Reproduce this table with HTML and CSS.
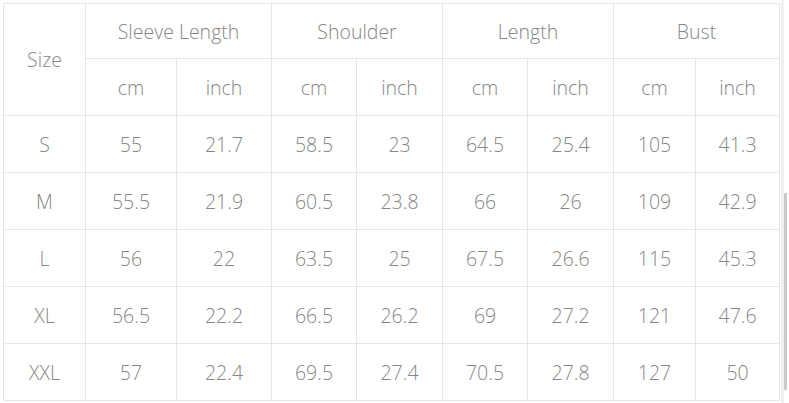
FILE: index.html
```html
<!DOCTYPE html>
<html>
<head>
<meta charset="utf-8">
<link rel="stylesheet" href="styles.css">
</head>
<body>
<div class="page">
<table class="chart">
<colgroup>
<col class="c1"><col class="c2"><col class="c3"><col class="c4"><col class="c5"><col class="c6"><col class="c7"><col class="c8"><col class="c9">
</colgroup>
<tr class="h1"><td rowspan="2">Size</td><td colspan="2">Sleeve Length</td><td colspan="2">Shoulder</td><td colspan="2">Length</td><td colspan="2">Bust</td></tr>
<tr class="h2"><td>cm</td><td>inch</td><td>cm</td><td>inch</td><td>cm</td><td>inch</td><td>cm</td><td>inch</td></tr>
<tr class="r"><td>S</td><td>55</td><td>21.7</td><td>58.5</td><td>23</td><td>64.5</td><td>25.4</td><td>105</td><td>41.3</td></tr>
<tr class="r"><td>M</td><td>55.5</td><td>21.9</td><td>60.5</td><td>23.8</td><td>66</td><td>26</td><td>109</td><td>42.9</td></tr>
<tr class="r"><td>L</td><td>56</td><td>22</td><td>63.5</td><td>25</td><td>67.5</td><td>26.6</td><td>115</td><td>45.3</td></tr>
<tr class="r"><td>XL</td><td>56.5</td><td>22.2</td><td>66.5</td><td>26.2</td><td>69</td><td>27.2</td><td>121</td><td>47.6</td></tr>
<tr class="r"><td>XXL</td><td>57</td><td>22.4</td><td>69.5</td><td>27.4</td><td>70.5</td><td>27.8</td><td>127</td><td>50</td></tr>
</table>
<div class="edge"></div>
<div class="bar"></div>
</div>
</body>
</html>
```
FILE: styles.css
```css
html, body {
  margin: 0;
  padding: 0;
  background: #ffffff;
}
.page {
  position: relative;
  width: 789px;
  height: 403px;
  overflow: hidden;
  padding: 3px 0 0 3px;
  box-sizing: border-box;
}
.chart {
  border-collapse: collapse;
  table-layout: fixed;
  width: 776px;
  font-family: "Open Sans", "Noto Sans", sans-serif;
  font-size: 19.5px;
  font-weight: 300;
  color: #868686;
}
.chart td {
  border: 1px solid #e6e6e6;
  text-align: center;
  vertical-align: middle;
  padding: 0;
}
.c1 { width: 82px; }
.c2 { width: 91px; }
.c3 { width: 95px; }
.c4 { width: 85px; }
.c5 { width: 86px; }
.c6 { width: 85px; }
.c7 { width: 86px; }
.c8 { width: 82px; }
.c9 { width: 84px; }
.h1 { height: 55px; }
.h2 { height: 57px; }
.r { height: 57px; }
.edge {
  position: absolute;
  left: 781px;
  top: 0;
  width: 3px;
  height: 403px;
  background: #f0f0f0;
}
.bar {
  position: absolute;
  left: 784px;
  top: 193px;
  width: 3px;
  height: 197px;
  background: #c9c9c9;
}
```
